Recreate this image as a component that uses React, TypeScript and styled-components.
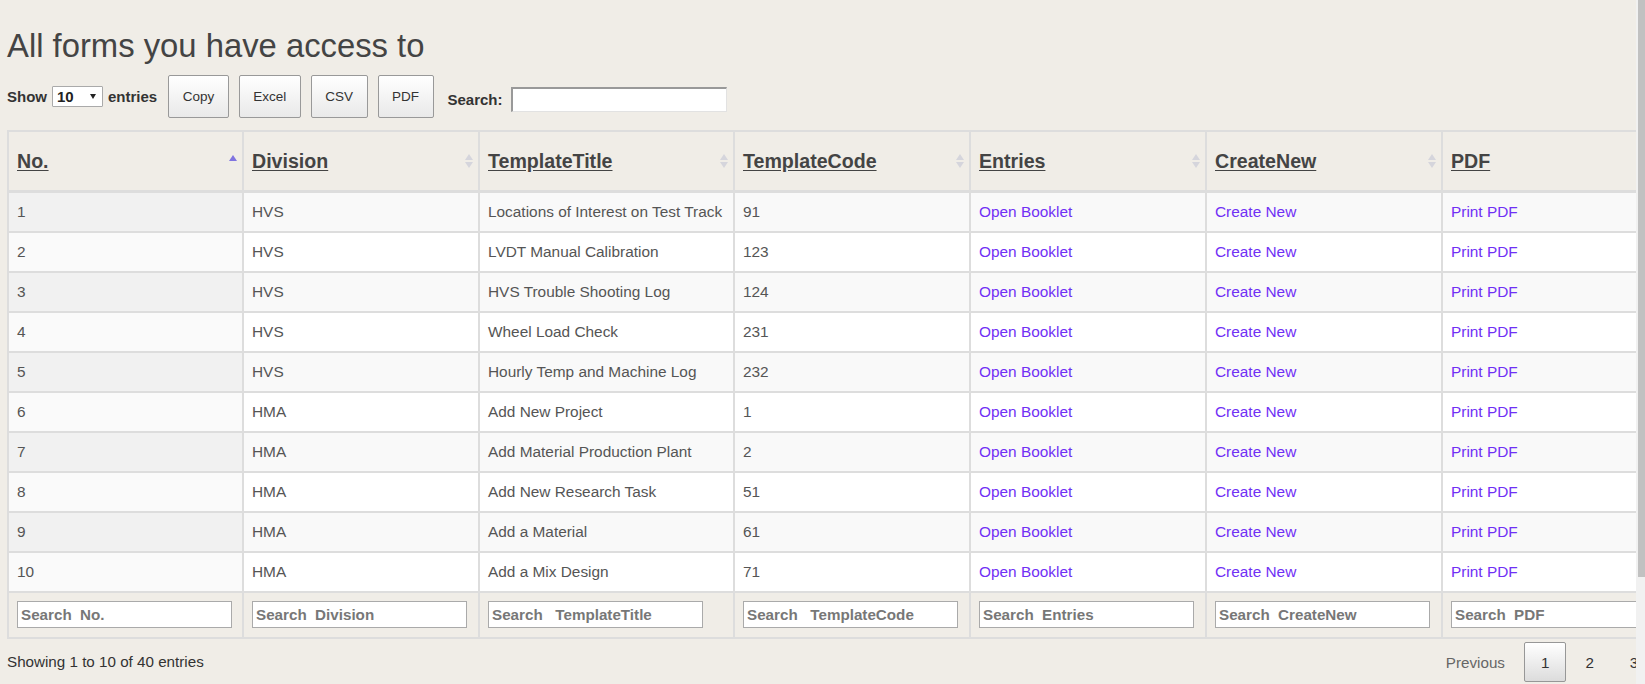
import React from "react";
import styled, { createGlobalStyle } from "styled-components";

const Global = createGlobalStyle`
  html, body {
    margin: 0;
    padding: 0;
    height: 684px;
    overflow: hidden;
    background: #f0ede7;
  }
  body {
    font-family: "Liberation Sans", Arial, sans-serif;
    color: #333;
  }
  * { box-sizing: border-box; }
`;

const Page = styled.div`
  display: flex;
  width: 1645px;
  height: 684px;
`;

const Main = styled.main`
  flex: 1;
  min-width: 0;
  overflow: hidden;
  padding-left: 7px;
`;

const Content = styled.div`
  width: 1760px;
`;

const Title = styled.h1`
  margin: 28px 0 0;
  font-size: 32.8px;
  line-height: 35px;
  font-weight: normal;
  color: #444;
`;

const Controls = styled.div`
  display: flex;
  align-items: center;
  height: 43px;
  margin-top: 12px;
`;

const LengthLabel = styled.label`
  display: flex;
  align-items: center;
  gap: 5px;
  font-size: 15px;
  font-weight: bold;
  color: #333;
`;

const SelectWrap = styled.span`
  position: relative;
  display: inline-flex;
  &::after {
    content: "";
    position: absolute;
    right: 7px;
    top: 8px;
    border-left: 3px solid transparent;
    border-right: 3px solid transparent;
    border-top: 5px solid #222;
    pointer-events: none;
  }
`;

const Select = styled.select`
  appearance: none;
  width: 51px;
  height: 21px;
  border: 1px solid #aaa;
  border-radius: 1px;
  background: #fff;
  padding: 0 0 0 4px;
  font-family: inherit;
  font-size: 15px;
  font-weight: bold;
  color: #222;
`;

const ButtonGroup = styled.div`
  display: flex;
  gap: 10px;
  margin-left: 11px;
`;

const ToolButton = styled.button`
  height: 43px;
  padding: 0 13.5px;
  border: 1px solid #999;
  border-radius: 2px;
  background: linear-gradient(to bottom, #ffffff 0%, #e9e9e9 100%);
  font-family: inherit;
  font-size: 13.5px;
  color: #333;
`;

const SearchLabel = styled.label`
  display: flex;
  align-items: center;
  gap: 8px;
  margin-left: 14px;
  margin-top: 6px;
  font-size: 15px;
  font-weight: bold;
  color: #333;
`;

const SearchInput = styled.input`
  width: 216px;
  height: 25px;
  background: #fff;
  border: 1px solid #e2e2e2;
  border-top: 2px solid #999;
  border-left: 2px solid #999;
  padding: 0 3px;
  font-family: inherit;
  font-size: 15px;
`;

const Table = styled.table`
  margin-top: 12px;
  width: 1672px;
  table-layout: fixed;
  border-collapse: separate;
  border-spacing: 0;
  border-top: 2px solid #dddddd;
  border-left: 2px solid #dddddd;
`;

const HeadCell = styled.th<{ $w: number }>`
  width: ${(p) => p.$w}px;
  height: 61px;
  padding: 0 5px 0 8px;
  background: #f0ede7;
  border-right: 2px solid #dddddd;
  border-bottom: 3px solid #dddddd;
  text-align: left;
  vertical-align: middle;
`;

const HeadInner = styled.div`
  display: flex;
  align-items: center;
  justify-content: space-between;
`;

const HeadLabel = styled.span`
  font-size: 19.6px;
  font-weight: bold;
  color: #444;
  text-decoration: underline;
  text-underline-offset: 2px;
`;

const SortIcon = styled.span<{ $active?: boolean }>`
  display: flex;
  flex-direction: column;
  gap: 2px;
  width: 8px;
  margin-bottom: ${(p) => (p.$active ? "7px" : "0")};
  &::before {
    content: "";
    border-left: 4px solid transparent;
    border-right: 4px solid transparent;
    border-bottom: 6px solid ${(p) => (p.$active ? "#8074e0" : "#d5d5dc")};
  }
  &::after {
    content: "";
    display: ${(p) => (p.$active ? "none" : "block")};
    border-left: 4px solid transparent;
    border-right: 4px solid transparent;
    border-top: 6px solid #d5d5dc;
  }
`;

const Row = styled.tr<{ $odd: boolean }>`
  background: ${(p) => (p.$odd ? "#f9f9f9" : "#ffffff")};
`;

const Cell = styled.td<{ $sorted?: boolean; $odd?: boolean }>`
  height: 40px;
  padding: 0 8px;
  border-right: 2px solid #dddddd;
  border-bottom: 2px solid #dddddd;
  font-size: 15.4px;
  color: #555;
  vertical-align: middle;
  white-space: nowrap;
  overflow: hidden;
  background: ${(p) =>
    p.$sorted ? (p.$odd ? "#f1f1f1" : "#fafafa") : "transparent"};
`;

const Link = styled.a`
  color: #7030f5;
  text-decoration: none;
`;

const FootCell = styled.th`
  height: 46px;
  padding: 8px 8px 9px;
  background: #f0ede7;
  border-right: 2px solid #dddddd;
  border-bottom: 2px solid #dddddd;
  text-align: left;
  vertical-align: top;
`;

const FootInput = styled.input`
  display: block;
  width: 215px;
  height: 27px;
  border: 1px solid #aaa;
  background: #fff;
  padding: 0 3px;
  font-family: inherit;
  font-size: 15.2px;
  font-weight: bold;
  color: #555;
  &::placeholder {
    color: #777;
    opacity: 1;
  }
`;

const InfoRow = styled.div`
  display: flex;
  align-items: center;
  justify-content: space-between;
  margin-top: 3px;
  height: 40px;
`;

const Info = styled.div`
  font-size: 15.2px;
  color: #333;
  margin-top: -2px;
`;

const Pager = styled.div`
  display: flex;
  gap: 2px;
`;

const PageButton = styled.span<{ $current?: boolean; $disabled?: boolean }>`
  display: flex;
  align-items: center;
  height: 40px;
  padding: 0 16px;
  border: 1px solid ${(p) => (p.$current ? "#979797" : "transparent")};
  border-radius: 2px;
  background: ${(p) =>
    p.$current ? "linear-gradient(to bottom, #ffffff 0%, #dcdcdc 100%)" : "transparent"};
  font-size: 15.2px;
  color: ${(p) => (p.$disabled ? "#666" : "#333")};
`;

const ScrollTrack = styled.div`
  flex: none;
  width: 9px;
  height: 684px;
  background: #f1f1f1;
  display: flex;
  justify-content: flex-end;
`;

const ScrollThumb = styled.div`
  width: 7px;
  height: 577px;
  background: #c1c1c1;
`;

const columns = [
  { key: "No.", w: 235, search: "Search\u00a0 No.", active: true },
  { key: "Division", w: 236, search: "Search\u00a0 Division" },
  { key: "TemplateTitle", w: 255, search: "Search\u00a0\u00a0 TemplateTitle" },
  { key: "TemplateCode", w: 236, search: "Search\u00a0\u00a0 TemplateCode" },
  { key: "Entries", w: 236, search: "Search\u00a0 Entries" },
  { key: "CreateNew", w: 236, search: "Search\u00a0 CreateNew" },
  { key: "PDF", w: 236, search: "Search\u00a0 PDF" },
];

const rows: [number, string, string, number][] = [
  [1, "HVS", "Locations of Interest on Test Track", 91],
  [2, "HVS", "LVDT Manual Calibration", 123],
  [3, "HVS", "HVS Trouble Shooting Log", 124],
  [4, "HVS", "Wheel Load Check", 231],
  [5, "HVS", "Hourly Temp and Machine Log", 232],
  [6, "HMA", "Add New Project", 1],
  [7, "HMA", "Add Material Production Plant", 2],
  [8, "HMA", "Add New Research Task", 51],
  [9, "HMA", "Add a Material", 61],
  [10, "HMA", "Add a Mix Design", 71],
];

export default function App() {
  return (
    <>
      <Global />
      <Page>
        <Main>
          <Content>
            <Title>All forms you have access to</Title>
            <Controls>
              <LengthLabel>
                Show
                <SelectWrap>
                  <Select defaultValue="10">
                    <option value="10">10</option>
                    <option value="25">25</option>
                    <option value="50">50</option>
                  </Select>
                </SelectWrap>
                entries
              </LengthLabel>
              <ButtonGroup>
                <ToolButton>Copy</ToolButton>
                <ToolButton>Excel</ToolButton>
                <ToolButton>CSV</ToolButton>
                <ToolButton>PDF</ToolButton>
              </ButtonGroup>
              <SearchLabel>
                Search:
                <SearchInput type="search" />
              </SearchLabel>
            </Controls>
            <Table>
              <thead>
                <tr>
                  {columns.map((c) => (
                    <HeadCell key={c.key} $w={c.w}>
                      <HeadInner>
                        <HeadLabel>{c.key}</HeadLabel>
                        <SortIcon $active={c.active} />
                      </HeadInner>
                    </HeadCell>
                  ))}
                </tr>
              </thead>
              <tbody>
                {rows.map((r, i) => {
                  const odd = i % 2 === 0;
                  return (
                    <Row key={r[0]} $odd={odd}>
                      <Cell $sorted $odd={odd}>{r[0]}</Cell>
                      <Cell>{r[1]}</Cell>
                      <Cell>{r[2]}</Cell>
                      <Cell>{r[3]}</Cell>
                      <Cell>
                        <Link href="#">Open Booklet</Link>
                      </Cell>
                      <Cell>
                        <Link href="#">Create New</Link>
                      </Cell>
                      <Cell>
                        <Link href="#">Print PDF</Link>
                      </Cell>
                    </Row>
                  );
                })}
              </tbody>
              <tfoot>
                <tr>
                  {columns.map((c) => (
                    <FootCell key={c.key}>
                      <FootInput placeholder={c.search} />
                    </FootCell>
                  ))}
                </tr>
              </tfoot>
            </Table>
            <InfoRow>
              <Info>Showing 1 to 10 of 40 entries</Info>
              <Pager>
                <PageButton $disabled>Previous</PageButton>
                <PageButton $current>1</PageButton>
                <PageButton>2</PageButton>
                <PageButton>3</PageButton>
                <PageButton>4</PageButton>
                <PageButton>Next</PageButton>
              </Pager>
            </InfoRow>
          </Content>
        </Main>
        <ScrollTrack>
          <ScrollThumb />
        </ScrollTrack>
      </Page>
    </>
  );
}
